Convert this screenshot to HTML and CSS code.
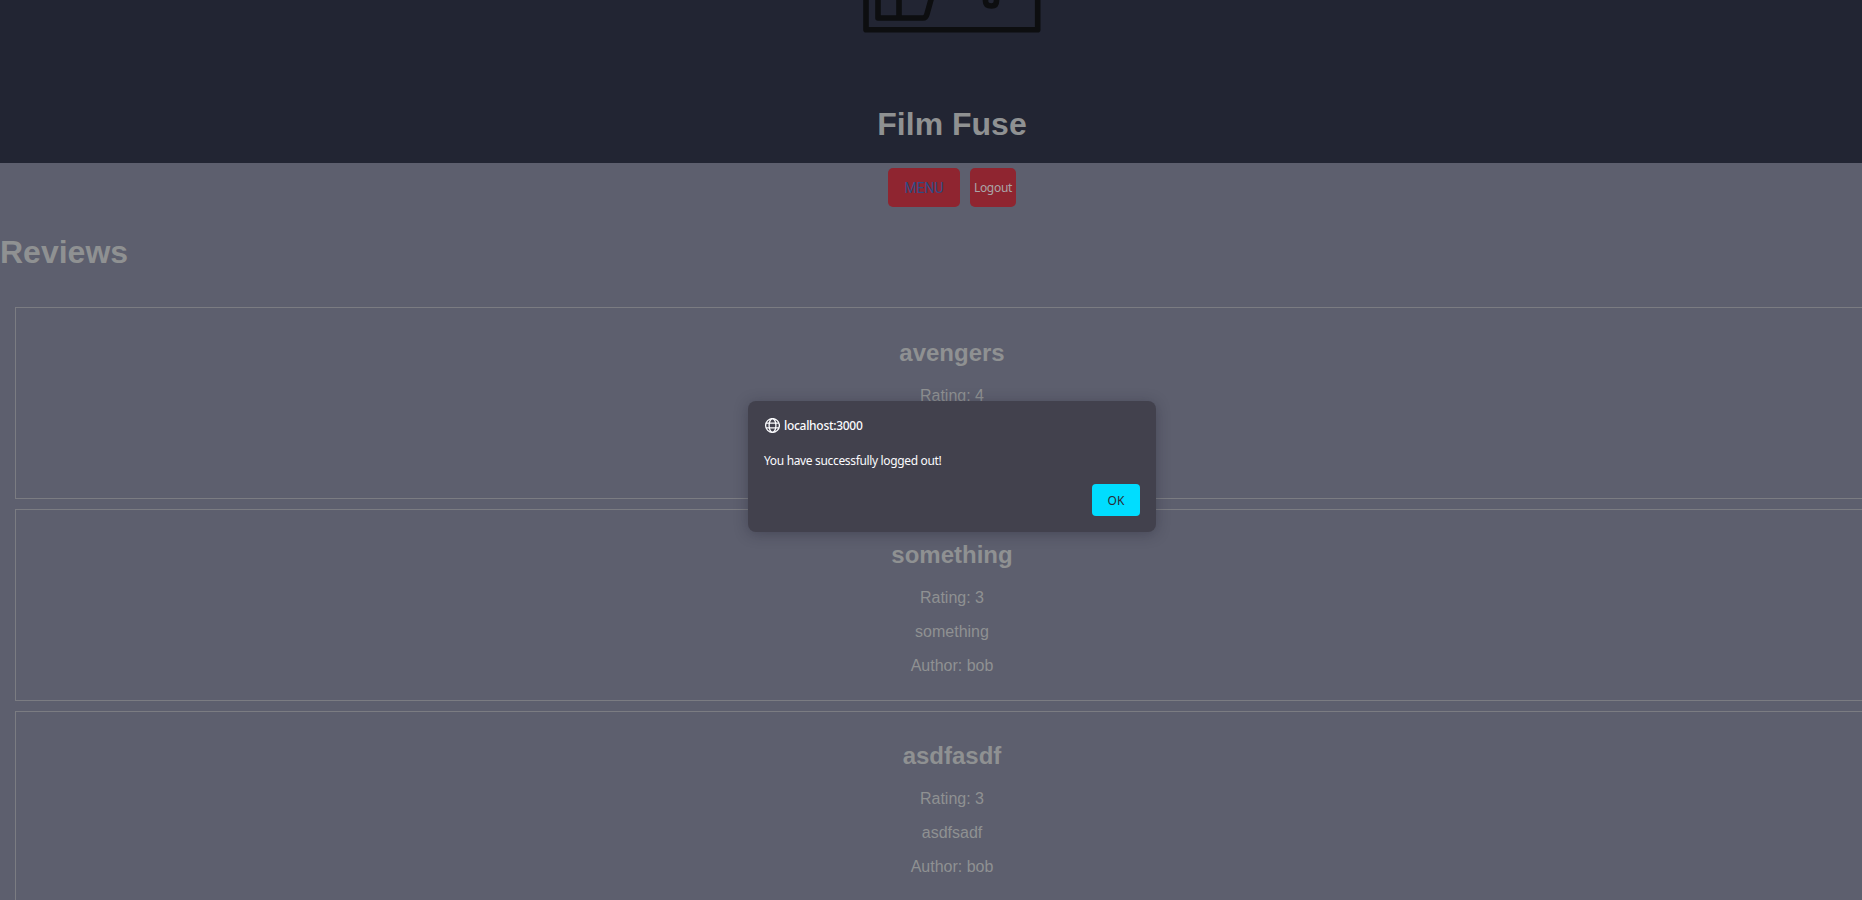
FILE: index.html
```html
<!DOCTYPE html>
<html lang="en">
<head>
<meta charset="utf-8">
<title>Film Fuse</title>
<link rel="stylesheet" href="styles.css">
</head>
<body>
<div class="page">
  <header class="header">
    <svg class="logo" width="178" height="34" viewBox="0 0 178 34" fill="none" stroke="#0d0e10" stroke-width="5.6">
      <path d="M3 -4V29.700H174.700V-4" stroke-linejoin="round"/>
      <path d="M15 -4V18H60Q63 18 64 14L69 -4M36 -4V18" stroke-linejoin="round"/>
      <path d="M122.500 -4V1Q122.500 6 128.500 6Q133.500 6 133.500 1V-4"/>
    </svg>
    <h1 class="title">Film Fuse</h1>
  </header>
  <nav class="nav">
    <a class="button menu"><span>MENU</span></a>
    <a class="button logout"><span>Logout</span></a>
  </nav>
  <main>
    <h1 class="heading">Reviews</h1>
    <section class="card"><h2>avengers</h2><p>Rating: 4</p></section>
    <section class="card"><h2>something</h2><p>Rating: 3</p><p>something</p><p>Author: bob</p></section>
    <section class="card last"><h2>asdfasdf</h2><p>Rating: 3</p><p>asdfsadf</p><p>Author: bob</p></section>
  </main>
</div>
<div class="dialog">
  <div class="origin">
    <svg width="16" height="16" viewBox="0 0 16 16" fill="none" stroke="#fbfbfe" stroke-width="1.3">
      <circle cx="8.500" cy="7.500" r="6.900"/><ellipse cx="8.500" cy="7.500" rx="3.400" ry="6.900"/><path d="M2 5.200H15M2 9.800H15"/>
    </svg>
    <span class="host">localhost:3000</span>
  </div>
  <p class="message"><span>You have successfully logged out!</span></p>
  <button class="ok">OK</button>
</div>
</body>
</html>
```
FILE: styles.css
```css
* { box-sizing: border-box; }
html, body { margin: 0; height: 900px; overflow: hidden; background: #5d5f6e; }
body { font: 16px/18px "Liberation Sans", Arial, sans-serif; color: #8f9192; }
.page { width: 1904px; }
.header { height: 163px; background: #222533; display: flex; flex-direction: column; align-items: center; }
.logo { display: block; margin-bottom: 72px; }
.title, .heading { margin: 0; font-size: 32px; line-height: 37px; }
.nav { display: flex; justify-content: center; gap: 10px; padding-top: 5px; height: 68px; }
.button { display: flex; align-items: center; justify-content: center; height: 39px; border-radius: 5px; background: #8f2530; }
.menu { width: 72px; font: 14px Roboto, sans-serif; color: #304b84; }
.logout { width: 46px; font: 12px "Noto Sans", sans-serif; color: #aaa5a8; letter-spacing: -.3px; }
.heading { margin: 3px 0 36px; }
.card { height: 192px; margin: 0 15px 10px; border: 1px solid #7b7c82; padding-top: 31px; text-align: center; }
.card h2 { margin: 0 0 21px; font-size: 24px; line-height: 27px; }
.card p { margin: 0 0 16px; }
.last { padding-top: 30px; }
.dialog { position: absolute; left: 748px; top: 401px; width: 408px; height: 131px; padding: 16px; border-radius: 8px; background: #42414d; box-shadow: 0 2px 14px rgba(30, 30, 45, .35); color: #fbfbfe; font: 12px/16px "Noto Sans", sans-serif; display: flex; flex-direction: column; }
.origin { display: flex; align-items: center; gap: 4px; height: 18px; }
.host { font-weight: 500; letter-spacing: -.29px; }
.message { margin: 18px 0 15px; letter-spacing: -.34px; }
.ok { align-self: flex-end; flex: none; width: 48px; height: 32px; border: 0; border-radius: 4px; background: #00ddff; color: #2b2a33; font: 12px "Noto Sans", sans-serif; padding: 0; }
```
